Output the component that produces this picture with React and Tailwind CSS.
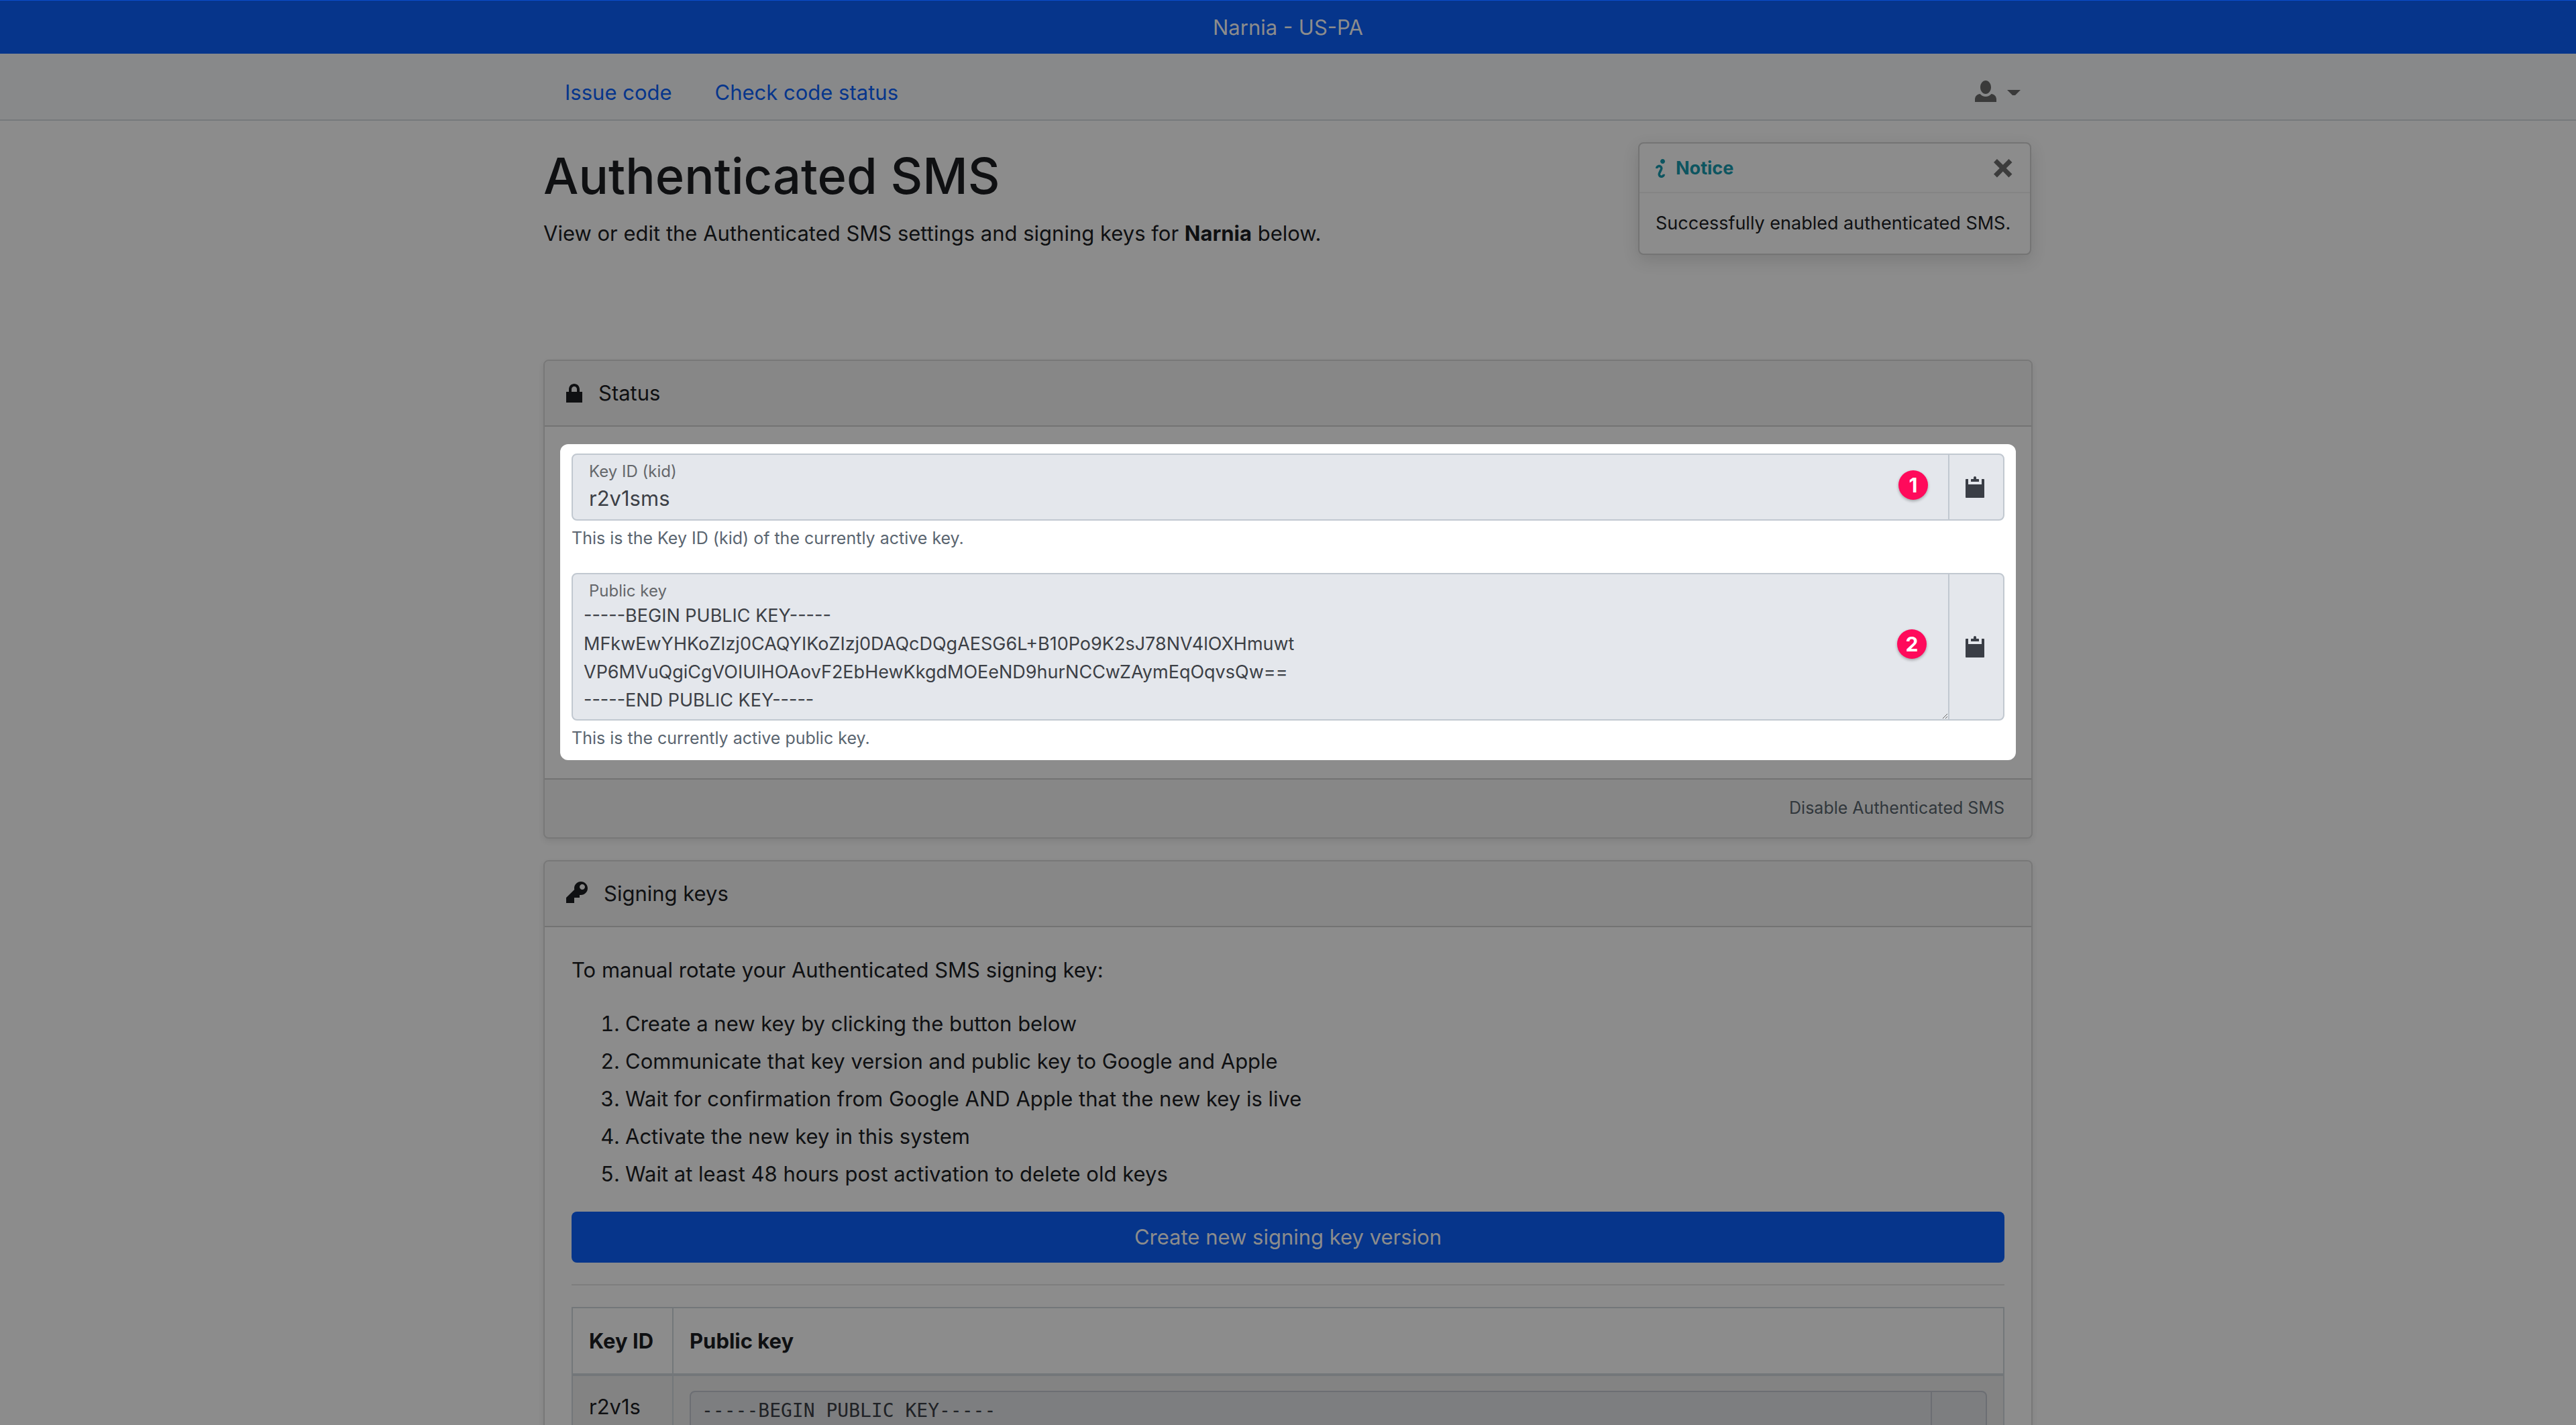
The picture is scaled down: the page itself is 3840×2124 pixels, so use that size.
import React from 'react';

const ICONS = {
  person: {
    w: 8,
    d: 'M4 0c-1.1 0-2 1.12-2 2.5s.9 2.5 2 2.5 2-1.12 2-2.5-.9-2.5-2-2.5zm-2.09 5c-1.06.05-1.91.92-1.91 2v1h8v-1c0-1.08-.84-1.95-1.91-2-.54.61-1.28 1-2.09 1-.81 0-1.55-.39-2.09-1z',
  },
  lock: {
    w: 6,
    d: 'M3 1c-1.1 0-2 .9-2 2v1h-1v4h6v-4h-1v-1c0-1.1-.9-2-2-2zm0 1c.56 0 1 .44 1 1v1h-2v-1c0-.56.44-1 1-1z',
  },
  key: {
    w: 8,
    d: 'M5.5 0c-1.38 0-2.5 1.12-2.5 2.5 0 .16.03.32.06.47l-3.06 3.03v2h3v-2h2v-1l.03-.03c.15.03.31.03.47.03 1.38 0 2.5-1.12 2.5-2.5s-1.12-2.5-2.5-2.5zm.5 1c.55 0 1 .45 1 1s-.45 1-1 1-1-.45-1-1 .45-1 1-1z',
  },
  clipboard: {
    w: 8,
    d: 'M3.5 0c-.28 0-.5.22-.5.5v.5h-.75c-.14 0-.25.11-.25.25v.75h3v-.75c0-.14-.11-.25-.25-.25h-.75v-.5c0-.28-.22-.5-.5-.5zm-3.25 1c-.14 0-.25.11-.25.25v6.5c0 .14.11.25.25.25h6.5c.14 0 .25-.11.25-.25v-6.5c0-.14-.11-.25-.25-.25h-.75v2h-5v-2h-.75z',
  },
  info: {
    w: 4,
    d: 'M3 0c-.55 0-1 .45-1 1s.45 1 1 1 1-.45 1-1-.45-1-1-1zm-1.5 2.5c-.83 0-1.5.67-1.5 1.5h1c0-.28.22-.5.5-.5s.5.22.5.5-1 1.64-1 2.5c0 .86.67 1.5 1.5 1.5s1.5-.67 1.5-1.5h-1c0 .28-.22.5-.5.5s-.5-.22-.5-.5c0-.36 1-1.84 1-2.5 0-.81-.67-1.5-1.5-1.5z',
  },
  x: {
    w: 8,
    d: 'M1.41 0l-1.41 1.41.72.72 1.78 1.81-1.78 1.78-.72.69 1.41 1.44.72-.72 1.81-1.81 1.78 1.81.69.72 1.44-1.44-.72-.69-1.81-1.78 1.81-1.81.72-.72-1.44-1.41-.69.72-1.78 1.78-1.81-1.78-.72-.72z',
  },
};

function Icon({ name, className }) {
  const { w, d } = ICONS[name];
  return (
    <svg viewBox={`0 0 ${w} 8`} className={className} fill="currentColor" aria-hidden="true">
      <path d={d} />
    </svg>
  );
}

function Card({ icon, title, children }) {
  return (
    <section className="mb-8 rounded-lg border-2 border-[#787878] bg-[#8c8c8c] shadow-[0_4px_8px_rgba(0,0,0,0.08)]">
      <h2 className="flex items-start gap-6 rounded-t-md border-b-2 border-[#737373] bg-[#878787] px-8 py-6">
        <Icon name={icon} className="mt-1.5 h-8" />
        {title}
      </h2>
      {children}
    </section>
  );
}

function Badge({ n, className }) {
  return (
    <span
      className={`absolute flex size-11 items-center justify-center rounded-full bg-[#ff0a5b] text-[30px] leading-none font-bold text-white shadow-[0_2px_4px_rgba(0,0,0,0.3)] ${className}`}
    >
      {n}
    </span>
  );
}

function CopyButton({ label }) {
  return (
    <button
      type="button"
      aria-label={label}
      className="flex items-center border-l-2 border-[#c1c8d0] px-6 text-[#3a3e46]"
    >
      <Icon name="clipboard" className="h-8 w-8" />
    </button>
  );
}

function Field({ id, label, help, badge, children }) {
  return (
    <div>
      <div className="flex rounded-lg border-2 border-[#c1c8d0] bg-[#e4e7ec] text-[#3c4046]">
        <div className="relative flex flex-1 flex-col pt-[9px]">
          <label htmlFor={id} className="px-6 text-[24px] leading-8 text-[#65676b]">
            {label}
          </label>
          {children}
          {badge}
        </div>
        <CopyButton label={`Copy ${label}`} />
      </div>
      <p className="mt-1.5 text-[25px] leading-10 text-[#5a6570]">{help}</p>
    </div>
  );
}

const PUBLIC_KEY = `-----BEGIN PUBLIC KEY-----
MFkwEwYHKoZIzj0CAQYIKoZIzj0DAQcDQgAESG6L+B10Po9K2sJ78NV4lOXHmuwt
VP6MVuQgiCgVOIUIHOAovF2EbHewKkgdMOEeND9hurNCCwZAymEqOqvsQw==
-----END PUBLIC KEY-----`;

const STEPS = [
  'Create a new key by clicking the button below',
  'Communicate that key version and public key to Google and Apple',
  'Wait for confirmation from Google AND Apple that the new key is live',
  'Activate the new key in this system',
  'Wait at least 48 hours post activation to delete old keys',
];

export default function App() {
  return (
    <div className="h-screen overflow-hidden bg-[#8c8c8c] font-['Inter',sans-serif] text-[31px] leading-[48px] text-[#0f1012]">
      <div className="border-t border-[#0a4ecc] bg-[#06358b] pt-4 pb-[15px] text-center text-[#8c8c8c]">
        Narnia - US-PA
      </div>

      <nav className="border-b-2 border-[#76797c] bg-[#88898a]">
        <div className="mx-auto flex max-w-[2220px] items-center justify-between pt-[34px] pr-[18px] pb-4 pl-8">
          <div className="flex gap-16 text-[#06358b]">
            <a href="#issue">Issue code</a>
            <a href="#status">Check code status</a>
          </div>
          <button type="button" aria-label="Account menu" className="flex items-center gap-4 text-[#3a3a3a]">
            <Icon name="person" className="mb-1 h-8" />
            <svg viewBox="0 0 20 10" className="w-5" fill="currentColor" aria-hidden="true">
              <path d="M0 1h20l-8 8h-4z" />
            </svg>
          </button>
        </div>
      </nav>

      <main className="mx-auto max-w-[2220px] pt-8">
        <header className="mb-[156px] flex items-start justify-between">
          <div>
            <h1 className="mb-3.5 pt-0.5 text-[74px] leading-[96px] font-medium">Authenticated SMS</h1>
            <p>
              View or edit the Authenticated SMS settings and signing keys for <b>Narnia</b> below.
            </p>
          </div>
          <div
            role="status"
            className="mr-0.5 w-[586px] rounded-lg border-2 border-[#747474] bg-[#8c8c8c] text-[27px] leading-[42px] shadow-[0_8px_24px_rgba(0,0,0,0.12)]"
          >
            <div className="flex items-center border-b-2 border-[#848484] pt-4 pr-[26px] pb-3.5 pl-6 text-[#0d5560]">
              <Icon name="info" className="mr-4 h-7" />
              <strong className="flex-1 font-bold">Notice</strong>
              <button type="button" aria-label="Close" className="text-[#3c3c3c]">
                <Icon name="x" className="h-7" />
              </button>
            </div>
            <p className="px-6 py-6 whitespace-nowrap">Successfully enabled authenticated SMS.</p>
          </div>
        </header>

        <Card icon="lock" title="Status">
          <div className="px-[23px] pt-[26px] pb-[27px]">
            <div className="flex flex-col gap-8 rounded-xl bg-white px-[17px] pt-3.5 pb-[13px]">
              <Field
                id="kid"
                label="Key ID (kid)"
                help="This is the Key ID (kid) of the currently active key."
                badge={<Badge n="1" className="top-[23px] right-[30px]" />}
              >
                <input
                  id="kid"
                  readOnly
                  defaultValue="r2v1sms"
                  className="mb-2 h-[47px] bg-transparent px-6 outline-none"
                />
              </Field>
              <Field
                id="pub"
                label="Public key"
                help="This is the currently active public key."
                badge={<Badge n="2" className="top-[82px] right-8" />}
              >
                <textarea
                  id="pub"
                  readOnly
                  rows={4}
                  defaultValue={PUBLIC_KEY}
                  className="block resize-y overflow-hidden bg-transparent px-4 pb-[7px] text-[27px] leading-[42px] outline-none"
                />
              </Field>
            </div>
          </div>
          <div className="flex justify-end rounded-b-md border-t-2 border-[#737373] bg-[#878787] px-10 pt-[22px] pb-6">
            <a href="#disable" className="text-[25px] leading-10 text-[#31373c]">
              Disable Authenticated SMS
            </a>
          </div>
        </Card>

        <Card icon="key" title="Signing keys">
          <div className="p-10">
            <p>To manual rotate your Authenticated SMS signing key:</p>
            <ol className="mt-8 mb-8 list-decimal pl-20">
              {STEPS.map((s) => (
                <li key={s} className="mb-2">
                  {s}
                </li>
              ))}
            </ol>
            <button type="button" className="block w-full rounded-lg bg-[#06358b] py-3.5 text-center text-[#8c8c8c]">
              Create new signing key version
            </button>
            <hr className="my-8 border-t-2 border-[#7e7e7e]" />
            <table className="w-full border-collapse text-left align-top">
              <thead>
                <tr className="h-[100px] border-b-4 border-[#73777a]">
                  <th className="w-[150px] border-2 border-b-4 border-[#73777a] px-6 font-bold whitespace-nowrap">
                    Key ID
                  </th>
                  <th className="border-2 border-b-4 border-[#73777a] px-6 font-bold">Public key</th>
                </tr>
              </thead>
              <tbody>
                <tr className="bg-[#838383] align-top">
                  <td className="border-2 border-[#73777a] px-6 py-[22px]">r2v1s</td>
                  <td className="border-2 border-[#73777a] px-6 py-[22px]">
                    <div className="flex rounded-lg border-2 border-[#6c6e73] bg-[#7d7e80]">
                      <textarea
                        aria-label="Public key for r2v1s"
                        readOnly
                        rows={4}
                        defaultValue={PUBLIC_KEY}
                        className="flex-1 resize-none overflow-hidden bg-transparent px-4 py-[7px] font-['DejaVu_Sans_Mono',monospace] text-[28px] leading-[42px] text-[#202226] outline-none"
                      />
                      <button
                        type="button"
                        aria-label="Copy public key for r2v1s"
                        className="flex items-center border-l-2 border-[#6c6e73] px-6 text-[#202226]"
                      >
                        <Icon name="clipboard" className="h-8 w-8" />
                      </button>
                    </div>
                  </td>
                </tr>
              </tbody>
            </table>
          </div>
        </Card>
      </main>
    </div>
  );
}
